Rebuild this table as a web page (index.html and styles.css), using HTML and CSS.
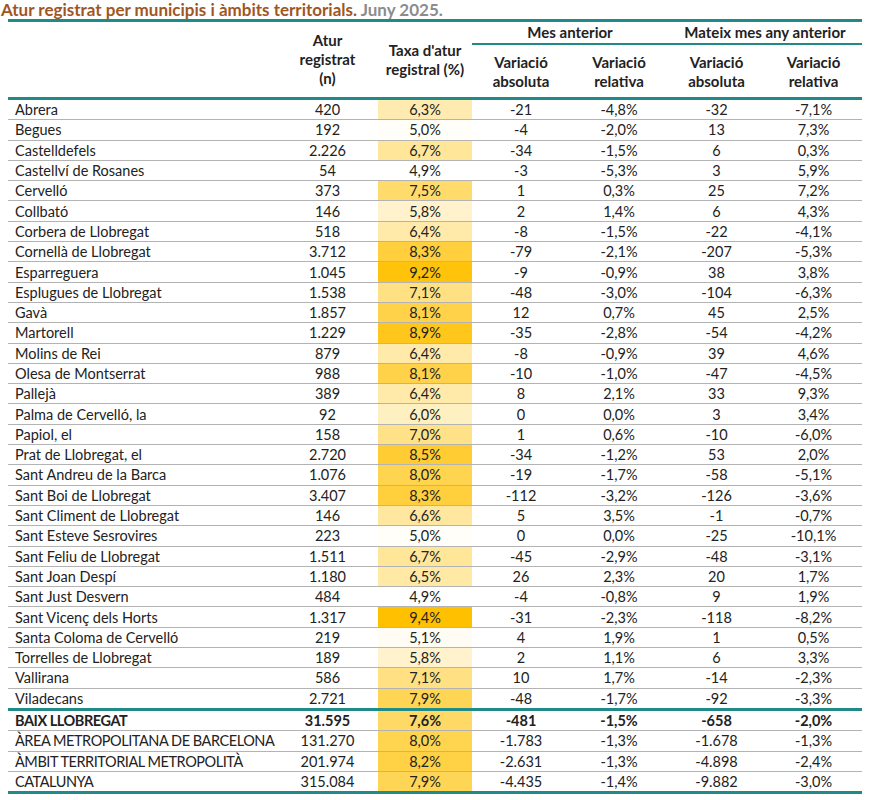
FILE: index.html
```html
<!DOCTYPE html>
<html lang="ca">
<head>
<meta charset="utf-8">
<title>Atur registrat per municipis</title>
<link rel="stylesheet" href="styles.css">
</head>
<body>
<h1 class="title">Atur registrat per municipis i àmbits territorials. <span class="date">Juny 2025.</span></h1>
<table class="tbl">
  <colgroup>
    <col class="c-name"><col class="c-atur"><col class="c-taxa"><col class="c-v"><col class="c-v"><col class="c-v2"><col class="c-v2">
  </colgroup>
  <thead>
    <tr class="h1">
      <th rowspan="2"></th>
      <th rowspan="2">Atur<br>registrat<br>(n)</th>
      <th rowspan="2">Taxa d'atur<br>registral (%)</th>
      <th colspan="2" class="grp">Mes anterior</th>
      <th colspan="2" class="grp">Mateix mes any anterior</th>
    </tr>
    <tr class="h2">
      <th>Variació<br>absoluta</th>
      <th>Variació<br>relativa</th>
      <th>Variació<br>absoluta</th>
      <th>Variació<br>relativa</th>
    </tr>
  </thead>
  <tbody>
    <tr><td>Abrera</td><td>420</td><td class="taxa" style="background:rgb(255,235,176)">6,3%</td><td>-21</td><td>-4,8%</td><td>-32</td><td>-7,1%</td></tr>
    <tr><td>Begues</td><td>192</td><td class="taxa" style="background:rgb(255,254,249)">5,0%</td><td>-4</td><td>-2,0%</td><td>13</td><td>7,3%</td></tr>
    <tr><td>Castelldefels</td><td>2.226</td><td class="taxa" style="background:rgb(255,230,153)">6,7%</td><td>-34</td><td>-1,5%</td><td>6</td><td>0,3%</td></tr>
    <tr><td>Castellví de Rosanes</td><td>54</td><td class="taxa" style="background:rgb(255,255,255)">4,9%</td><td>-3</td><td>-5,3%</td><td>3</td><td>5,9%</td></tr>
    <tr><td>Cervelló</td><td>373</td><td class="taxa" style="background:rgb(255,219,108)">7,5%</td><td>1</td><td>0,3%</td><td>25</td><td>7,2%</td></tr>
    <tr><td>Collbató</td><td>146</td><td class="taxa" style="background:rgb(255,242,204)">5,8%</td><td>2</td><td>1,4%</td><td>6</td><td>4,3%</td></tr>
    <tr><td>Corbera de Llobregat</td><td>518</td><td class="taxa" style="background:rgb(255,234,170)">6,4%</td><td>-8</td><td>-1,5%</td><td>-22</td><td>-4,1%</td></tr>
    <tr><td>Cornellà de Llobregat</td><td>3.712</td><td class="taxa" style="background:rgb(255,207,62)">8,3%</td><td>-79</td><td>-2,1%</td><td>-207</td><td>-5,3%</td></tr>
    <tr><td>Esparreguera</td><td>1.045</td><td class="taxa" style="background:rgb(255,195,11)">9,2%</td><td>-9</td><td>-0,9%</td><td>38</td><td>3,8%</td></tr>
    <tr><td>Esplugues de Llobregat</td><td>1.538</td><td class="taxa" style="background:rgb(255,224,130)">7,1%</td><td>-48</td><td>-3,0%</td><td>-104</td><td>-6,3%</td></tr>
    <tr><td>Gavà</td><td>1.857</td><td class="taxa" style="background:rgb(255,210,74)">8,1%</td><td>12</td><td>0,7%</td><td>45</td><td>2,5%</td></tr>
    <tr><td>Martorell</td><td>1.229</td><td class="taxa" style="background:rgb(255,199,28)">8,9%</td><td>-35</td><td>-2,8%</td><td>-54</td><td>-4,2%</td></tr>
    <tr><td>Molins de Rei</td><td>879</td><td class="taxa" style="background:rgb(255,234,170)">6,4%</td><td>-8</td><td>-0,9%</td><td>39</td><td>4,6%</td></tr>
    <tr><td>Olesa de Montserrat</td><td>988</td><td class="taxa" style="background:rgb(255,210,74)">8,1%</td><td>-10</td><td>-1,0%</td><td>-47</td><td>-4,5%</td></tr>
    <tr><td>Pallejà</td><td>389</td><td class="taxa" style="background:rgb(255,234,170)">6,4%</td><td>8</td><td>2,1%</td><td>33</td><td>9,3%</td></tr>
    <tr><td>Palma de Cervelló, la</td><td>92</td><td class="taxa" style="background:rgb(255,240,193)">6,0%</td><td>0</td><td>0,0%</td><td>3</td><td>3,4%</td></tr>
    <tr><td>Papiol, el</td><td>158</td><td class="taxa" style="background:rgb(255,226,136)">7,0%</td><td>1</td><td>0,6%</td><td>-10</td><td>-6,0%</td></tr>
    <tr><td>Prat de Llobregat, el</td><td>2.720</td><td class="taxa" style="background:rgb(255,205,51)">8,5%</td><td>-34</td><td>-1,2%</td><td>53</td><td>2,0%</td></tr>
    <tr><td>Sant Andreu de la Barca</td><td>1.076</td><td class="taxa" style="background:rgb(255,212,79)">8,0%</td><td>-19</td><td>-1,7%</td><td>-58</td><td>-5,1%</td></tr>
    <tr><td>Sant Boi de Llobregat</td><td>3.407</td><td class="taxa" style="background:rgb(255,207,62)">8,3%</td><td>-112</td><td>-3,2%</td><td>-126</td><td>-3,6%</td></tr>
    <tr><td>Sant Climent de Llobregat</td><td>146</td><td class="taxa" style="background:rgb(255,231,159)">6,6%</td><td>5</td><td>3,5%</td><td>-1</td><td>-0,7%</td></tr>
    <tr><td>Sant Esteve Sesrovires</td><td>223</td><td class="taxa" style="background:rgb(255,254,249)">5,0%</td><td>0</td><td>0,0%</td><td>-25</td><td>-10,1%</td></tr>
    <tr><td>Sant Feliu de Llobregat</td><td>1.511</td><td class="taxa" style="background:rgb(255,230,153)">6,7%</td><td>-45</td><td>-2,9%</td><td>-48</td><td>-3,1%</td></tr>
    <tr><td>Sant Joan Despí</td><td>1.180</td><td class="taxa" style="background:rgb(255,233,164)">6,5%</td><td>26</td><td>2,3%</td><td>20</td><td>1,7%</td></tr>
    <tr><td>Sant Just Desvern</td><td>484</td><td class="taxa" style="background:rgb(255,255,255)">4,9%</td><td>-4</td><td>-0,8%</td><td>9</td><td>1,9%</td></tr>
    <tr><td>Sant Vicenç dels Horts</td><td>1.317</td><td class="taxa" style="background:rgb(255,192,0)">9,4%</td><td>-31</td><td>-2,3%</td><td>-118</td><td>-8,2%</td></tr>
    <tr><td>Santa Coloma de Cervelló</td><td>219</td><td class="taxa" style="background:rgb(255,252,244)">5,1%</td><td>4</td><td>1,9%</td><td>1</td><td>0,5%</td></tr>
    <tr><td>Torrelles de Llobregat</td><td>189</td><td class="taxa" style="background:rgb(255,242,204)">5,8%</td><td>2</td><td>1,1%</td><td>6</td><td>3,3%</td></tr>
    <tr><td>Vallirana</td><td>586</td><td class="taxa" style="background:rgb(255,224,130)">7,1%</td><td>10</td><td>1,7%</td><td>-14</td><td>-2,3%</td></tr>
    <tr class="last-muni"><td>Viladecans</td><td>2.721</td><td class="taxa" style="background:rgb(255,213,85)">7,9%</td><td>-48</td><td>-1,7%</td><td>-92</td><td>-3,3%</td></tr>
    <tr class="total caps"><td>BAIX LLOBREGAT</td><td>31.595</td><td class="taxa" style="background:rgb(255,217,102)">7,6%</td><td>-481</td><td>-1,5%</td><td>-658</td><td>-2,0%</td></tr>
    <tr class="caps"><td>ÀREA METROPOLITANA DE BARCELONA</td><td>131.270</td><td class="taxa" style="background:rgb(255,212,79)">8,0%</td><td>-1.783</td><td>-1,3%</td><td>-1.678</td><td>-1,3%</td></tr>
    <tr class="caps"><td>ÀMBIT TERRITORIAL METROPOLITÀ</td><td>201.974</td><td class="taxa" style="background:rgb(255,209,68)">8,2%</td><td>-2.631</td><td>-1,3%</td><td>-4.898</td><td>-2,4%</td></tr>
    <tr class="last caps"><td>CATALUNYA</td><td>315.084</td><td class="taxa" style="background:rgb(255,213,85)">7,9%</td><td>-4.435</td><td>-1,4%</td><td>-9.882</td><td>-3,0%</td></tr>
  </tbody>
</table>
</body>
</html>
```

FILE: styles.css
```css
html, body {
  margin: 0;
  padding: 0;
  background: #ffffff;
}

body {
  font-family: Lato, "Open Sans", "Liberation Sans", sans-serif;
  color: #222222;
}

.title {
  margin: 0;
  padding: 0 0 0 1px;
  height: 19px;
  font-size: 17px;
  line-height: 19px;
  font-weight: 700;
  color: #a0561f;
  white-space: nowrap;
}

.title .date {
  color: #8c8c8c;
}

.tbl {
  margin-left: 8px;
  width: 854px;
  border-collapse: separate;
  border-spacing: 0;
  table-layout: fixed;
  font-size: 14.5px;
}

.c-name { width: 269px; }
.c-atur { width: 101px; }
.c-taxa { width: 94px; }
.c-v { width: 98px; }
.c-v2 { width: 97px; }

.tbl th {
  font-size: 15px;
  font-weight: 700;
  text-align: center;
  vertical-align: middle;
  padding: 0;
  line-height: 19px;
}

.h1 th {
  border-top: 3px solid #1f8a87;
  height: 21px;
}

.h1 th.grp {
  border-bottom: 2px solid #1f8a87;
}

.h2 th {
  height: 50px;
  padding-top: 2px;
}

thead tr:last-child th,
.h1 th[rowspan] {
  border-bottom: 3px solid #1f8a87;
}

.tbl td {
  padding: 0;
  height: 19.3px;
  line-height: 19px;
  text-align: center;
  border-bottom: 1px solid #b3b3b3;
  white-space: nowrap;
}

.tbl td:first-child {
  text-align: left;
  padding-left: 7px;
}

.tbl tr.caps td:first-child {
  letter-spacing: -0.45px;
}

.tbl tr.last-muni td {
  border-bottom: 3px solid #1f8a87;
}

.tbl tr.total td {
  font-weight: 700;
}

.tbl tr.last td {
  border-bottom: 3px solid #1f8a87;
}
```
